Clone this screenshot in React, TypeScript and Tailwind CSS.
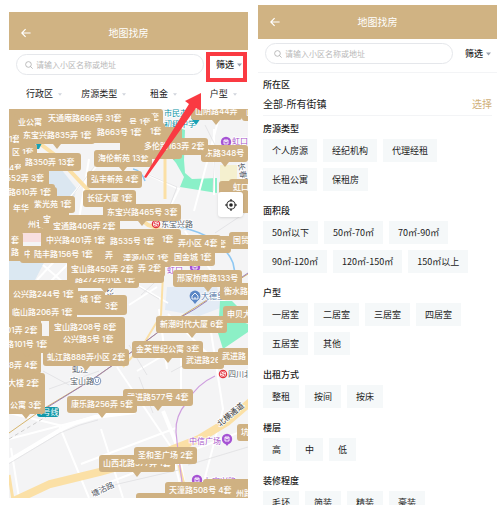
import { useState } from "react";

type Pin = { x: number; y: number; text: string; tail?: boolean };

// x, y, width, height of bubbles that are buried under the labelled ones
const BURIED = [
  [-4, -4, 156, 38],
  [111, 18, 62, 32],
  [-4, 30, 30, 16],
  [-4, 44, 76, 18],
  [-4, 60, 44, 20],
  [-4, 78, 52, 30],
  [-4, 98, 64, 20],
  [-4, 106, 114, 18],
  [-4, 122, 16, 26],
  [32, 120, 140, 28],
  [58, 148, 64, 26],
  [108, 146, 47, 28],
  [-4, 171, 70, 34],
  [66, 186, 52, 20],
  [-4, 204, 36, 58],
  [40, 208, 76, 38],
  [-4, 264, 40, 36],
  [210, 72, 40, 32],
  [190, 127, 32, 17],
  [194, 370, 60, 30],
  [127, 384, 80, 17],
];

// later pins are drawn over earlier ones, x / y is the top left of the bubble
const PINS: Pin[] = [
  { x: 138, y: 0, text: "套" },
  { x: 5, y: 5, text: "业公寓" },
  { x: 35, y: 1, text: "天通庵路666弄 31套" },
  { x: 116, y: 5, text: "号 1套" },
  { x: 137, y: 14, text: "1套" },
  { x: -4, y: 22, text: "1套" },
  { x: 84, y: 15, text: "路663号 1套" },
  { x: 10, y: 18, text: "东宝兴路835弄 1套", tail: true },
  { x: -1, y: 35, text: "区 1套" },
  { x: -4, y: 51, text: "4套" },
  { x: 12, y: 45, text: "路350弄 13套" },
  { x: -7, y: 61, text: "552弄 3套" },
  { x: -5, y: 75, text: "路610弄 1套" },
  { x: 0, y: 91, text: "年华" },
  { x: 21, y: 87, text: "紫光苑 1套" },
  { x: 85, y: 41, text: "海伦新苑 13套", tail: true },
  { x: 182, y: -6, text: "山阴路44弄", tail: true },
  { x: 233, y: -5, text: "山" },
  { x: 192, y: 36, text: "东路348号", tail: true },
  { x: 131, y: 29, text: "多伦路163弄 2套", tail: true },
  { x: 78, y: 62, text: "弘丰新苑 4套" },
  { x: 74, y: 81, text: "长征大厦 1套" },
  { x: 220, y: 70, text: "虹口" },
  { x: 15, y: 107, text: "州君" },
  { x: 30, y: 102, text: "宝" },
  { x: 94, y: 95, text: "东宝兴路465号 3套", tail: true },
  { x: 40, y: 109, text: "宝通路406弄 2套" },
  { x: -2, y: 123, text: "套" },
  { x: -2, y: 135, text: "路" },
  { x: 149, y: 122, text: "1套" },
  { x: 205, y: 127, text: "套" },
  { x: 165, y: 126, text: "弄小区 4套" },
  { x: 220, y: 123, text: "国贸" },
  { x: 97, y: 124, text: "路535号 1套" },
  { x: 33, y: 123, text: "中兴路401弄 1套" },
  { x: 92, y: 138, text: "弄" },
  { x: 110, y: 141, text: "溧源小区 1套" },
  { x: 161, y: 140, text: "国金城 1套" },
  { x: 11, y: 137, text: "中" },
  { x: 21, y: 137, text: "陆丰路156号 1套" },
  { x: 62, y: 162, text: "路272弄小区 1套", tail: true },
  { x: 58, y: 152, text: "宝山路450弄 2套" },
  { x: 125, y: 151, text: "弄 2套", tail: true },
  { x: 164, y: 161, text: "邢家桥南路133号", tail: true },
  { x: 211, y: 174, text: "衡水路" },
  { x: 214, y: 197, text: "申贝大" },
  { x: 92, y: 189, text: "3套" },
  { x: 67, y: 182, text: "城 1套" },
  { x: 0, y: 177, text: "公兴路244号 1套" },
  { x: -1, y: 195, text: "临山路206弄 1套" },
  { x: -7, y: 213, text: "01弄 2套" },
  { x: 41, y: 210, text: "宝山路208号 8套" },
  { x: 50, y: 222, text: "公兴路5号 1套" },
  { x: -7, y: 227, text: "路101号 1套", tail: true },
  { x: -4, y: 248, text: "8弄 4套" },
  { x: 34, y: 240, text: "虬江路888弄小区 2套", tail: true },
  { x: -5, y: 266, text: "大楼 2套" },
  { x: -3, y: 288, text: "公寓 3套", tail: true },
  { x: 114, y: 280, text: "武进路577号 4套", tail: true },
  { x: 58, y: 287, text: "康乐路256弄 5套", tail: true },
  { x: 147, y: 207, text: "新潮时代大厦 6套", tail: true },
  { x: 123, y: 232, text: "金芙世纪公寓 3套", tail: true },
  { x: 173, y: 243, text: "武进路26" },
  { x: 209, y: 239, text: "武进路" },
  { x: 90, y: 346, text: "山西北路577弄 1套", tail: true },
  { x: 125, y: 338, text: "圣和圣广场 2套" },
  { x: 228, y: 315, text: "坑" },
  { x: 223, y: 376, text: "州路" },
  { x: 156, y: 373, text: "天潼路508号 4套" },
];

const DISTRICTS = ["行政区", "房源类型", "租金", "户型"];

const SECTIONS = [
  {
    title: "房源类型",
    options: ["个人房源", "经纪机构", "代理经租", "长租公寓", "保租房"],
  },
  {
    title: "面积段",
    options: [
      "50㎡以下",
      "50㎡-70㎡",
      "70㎡-90㎡",
      "90㎡-120㎡",
      "120㎡-150㎡",
      "150㎡以上",
    ],
  },
  {
    title: "户型",
    options: ["一居室", "二居室", "三居室", "四居室", "五居室", "其他"],
  },
  { title: "出租方式", options: ["整租", "按间", "按床"] },
  { title: "楼层", options: ["高", "中", "低"] },
  { title: "装修程度", options: ["毛坯", "简装", "精装", "豪装"] },
];

function Caret({ small = false }: { small?: boolean }) {
  return (
    <svg
      viewBox="0 0 6 4"
      className={small ? "w-1 h-[3px] text-gray-300" : "w-[5px] h-1 text-gray-400"}
      aria-hidden="true"
    >
      <path d="M0 0.3h6L3 3.8z" fill="currentColor" />
    </svg>
  );
}

function Header({ className }: { className: string }) {
  return (
    <header
      className={`relative flex shrink-0 items-center justify-center bg-[#d0b383] text-white ${className}`}
    >
      <button type="button" aria-label="返回" className="absolute left-3">
        <svg viewBox="0 0 10 10" className="size-[10px]" fill="none">
          <path
            d="M9.6 5H1M4.6 1.2L0.8 5l3.8 3.8"
            stroke="currentColor"
            strokeWidth="1.2"
          />
        </svg>
      </button>
      <h1 className="text-[10px] leading-4">地图找房</h1>
    </header>
  );
}

function SearchRow({ marked = false }: { marked?: boolean }) {
  return (
    <div className="relative flex shrink-0 items-center gap-3 pt-1 pr-[6px] pl-[7px]">
      <label className="flex h-[21px] min-w-0 flex-1 items-center gap-[3px] rounded-full border border-gray-200 pl-2">
        <svg viewBox="0 0 9 9" className="size-[8px] shrink-0" fill="none">
          <circle cx="3.9" cy="3.9" r="3.2" stroke="#a3a3a3" strokeWidth="0.8" />
          <path d="M6.2 6.2L8.6 8.6" stroke="#a3a3a3" strokeWidth="0.8" />
        </svg>
        <input
          type="text"
          aria-label="搜索"
          placeholder="请输入小区名称或地址"
          className="w-full min-w-0 text-[8px] leading-3 outline-none placeholder:text-[#b9b9b9]"
        />
      </label>
      <button
        type="button"
        className="flex items-center gap-[3px] text-[9px] leading-3 font-medium text-[#222]"
      >
        筛选
        <Caret />
      </button>
      {marked && (
        <span className="absolute top-[2px] right-px h-[30px] w-[41px] border-4 border-[#fa3a42]" />
      )}
    </div>
  );
}

function MapBase() {
  return (
    <svg
      viewBox="0 0 239 389"
      preserveAspectRatio="xMinYMin slice"
      className="absolute inset-0 h-full w-full"
      aria-hidden="true"
    >
      <rect width="239" height="389" fill="#f4f4f5" />
      {/* blocks */}
      <path d="M38 60h14l16 20-6 16-24 4z" fill="#dbe7f1" />
      <path d="M0 148h38l-12 23H0z" fill="#dbe8f2" />
      <path d="M12 124h20v9H12z" fill="#f8dfe0" />
      <path d="M158 178h50l6 20-24 9-34-6z" fill="#e3ebf5" />
      <path d="M211 56h17v25h-17z" fill="#f5f0cf" />
      <path
        d="M171 19l5 2-1 30 1 13 7 6 25-1v15l-37-6 4-10-8-14-5-6z"
        fill="#8af0c8"
      />
      <path d="M211 192h12l8 8v12l8 3v8l-25 17-5-16z" fill="#8cf0c6" />
      {/* minor streets */}
      <g stroke="#ffffff" strokeWidth="2" fill="none">
        <path d="M28 171l26-28M40 174l30-30M34 156l28 24" />
        <path d="M60 90l38-46M70 110l10-60M140 66l30 14-12 24" />
        <path d="M111 166l48 28M120 196l28-18M128 262l44-26M172 236v50" />
        <path d="M108 258l54 80 12 50M159 205l60 60M200 210l14 90-20 76" />
        <path d="M72 355l95-36M50 316l30 73M92 320l22 69M96 375l143-55" />
        <path d="M150 200l8 60M0 330l100-26M185 102l24-90M205 20v66" />
        <path d="M0 304l58 14M10 389l-8-50M176 122l30 46" />
      </g>
      <g stroke="#dcdce0" strokeWidth="0.7" fill="none">
        <path d="M58 94l36-48M140 66l28 12-10 26M196 16l10 20-2 46" />
        <path d="M34 262l26 14 28-8 30-22M162 263l26-14M40 280l50-18" />
        <path d="M130 268l14 36M120 236l18 30M179 356l60-18M96 378l78-18" />
        <path d="M120 172l30 18M132 186l24-22M206 124l33-22" />
      </g>
      <path d="M-4 354l55-33 15-7 20-6 40-5" stroke="#fff" strokeWidth="4" fill="none" />
      <path d="M-4 357l55-33 20-8 18-5" stroke="#dadade" strokeWidth="0.6" fill="none" />
      <path d="M154 302l14 34 6 36" stroke="#fff" strokeWidth="4" fill="none" />
      {/* main roads */}
      <g stroke="#fbe0a6" fill="none">
        <path d="M-4 396l45-21 50-12 50-14 49-19 28-17 28-24" strokeWidth="8" />
        <path d="M30 34l16 12 34 36" strokeWidth="4" />
        <path d="M117 98l22 18 40 14" strokeWidth="4" />
        <path d="M154 166l-2 40-18 30-20 22" strokeWidth="2" />
        <path d="M156 40v50M170 356l5 20M0 366l4 25" strokeWidth="3" />
      </g>
      {/* metro lines and river */}
      <path d="M0 324l34-24 50-30 40-28 36-27 79-50" stroke="#d6b56c" strokeWidth="1" fill="none" />
      <path d="M34 301l50-31 40-28 36-27 26-15 53-36" stroke="#9a7fb4" strokeWidth="1" fill="none" />
      <path d="M0 330l50-30" stroke="#bbb" strokeWidth="0.7" strokeDasharray="4 3" fill="none" />
      <path
        d="M206 267q-18 8-28 26-12 14-11 30 2 20 6 50"
        stroke="#cf9fdf"
        strokeWidth="1.2"
        fill="none"
      />
      <path d="M124 60q8 1 12 12M160 116q52 8 64 38l2 10" stroke="#8fc8f3" strokeWidth="1.6" fill="none" />
      {/* place names */}
      <g
        fontFamily='"Noto Sans CJK SC", sans-serif'
        fontSize="8"
        stroke="#fff"
        strokeWidth="1.5"
        paintOrder="stroke"
      >
        <g fill="#555b68">
          <text x="152" y="118">东宝兴路</text>
          <text x="192" y="190" fill="#5779a8">大德里</text>
          <text x="61" y="275">宝山路</text>
          <text x="63" y="263">虬江</text>
          <text x="219" y="268">四川北</text>
          <text x="84" y="388" transform="rotate(-25 84 388)">塘沽路</text>
          <text x="211" y="318" transform="rotate(-40 211 318)" fill="#333">北横通道</text>
          <text x="229" y="54" transform="rotate(80 229 54)">长春路</text>
          <text x="97" y="176" transform="rotate(80 97 176)">公兴</text>
        </g>
        <g fill="#0c93a6">
          <text x="155" y="7">市民办</text>
          <text x="155" y="18">初级中学</text>
        </g>
        <g fill="#a653c9">
          <text x="223" y="35">虹口</text>
          <text x="158" y="164">虹口</text>
          <text x="180" y="335">中信广场</text>
          <text x="195" y="375">七宝兴路</text>
        </g>
      </g>
      {/* poi icons */}
      <path d="M182 9h10l-5 7z" fill="#16a0b4" />
      <path d="M27 34h6l-3 6h-2z" fill="#16a0b4" />
      <rect x="28" y="298" width="22" height="10" rx="3" fill="#1097a8" />
      <text x="29" y="306" fontSize="8" fill="#fff" fontFamily='"Noto Sans CJK SC", sans-serif'>
        4号线
      </text>
      {[
        [217, 33],
        [186, 158],
        [218, 330],
        [188, 371],
      ].map(([x, y]) => (
        <g key={`${x}-${y}`} fill="#a653d4">
          <path d={`M${x - 3} ${y + 3}h6l-3 4z`} />
          <circle cx={x} cy={y} r="5.2" />
          <path
            d={`M${x - 2} ${y - 2}h4v4h-4zM${x - 1} ${y - 2}v1.4q1 1 2 0v-1.4`}
            fill="none"
            stroke="#fff"
            strokeWidth="0.9"
          />
        </g>
      ))}
      <path d="M182 190h8l-4 5z" fill="#5b87c5" />
      <circle cx="186" cy="187" r="5.4" fill="#5b87c5" />
      <path d="M183 190v-3l3-3 3 3v3zM186 190v-2" fill="none" stroke="#fff" strokeWidth="0.9" />
      {[
        [147, 115],
        [214, 265],
      ].map(([x, y]) => (
        <g key={`${x}-${y}`}>
          <circle cx={x} cy={y} r="3.6" fill="#fff" stroke="#e2323c" strokeWidth="1.3" />
          <path
            d={`M${x + 2} ${y - 1.6}q-3-1.6-4 0t2 1.6 2 1.6-4 0`}
            fill="none"
            stroke="#e2323c"
            strokeWidth="0.9"
          />
        </g>
      ))}
      <circle cx="88" cy="272" r="3.8" fill="#fff" stroke="#7d95bb" strokeWidth="1" />
      <path d="M86.6 270v3q1.4 1.6 2.8 0v-3" fill="none" stroke="#7d95bb" strokeWidth="0.9" />
    </svg>
  );
}

function MapPanel() {
  return (
    <section className="relative flex min-w-0 flex-col bg-white">
      <Header className="h-[38px] pt-1" />
      <SearchRow marked />
      <div className="mt-1 grid h-[30px] shrink-0 grid-cols-4">
        {DISTRICTS.map((name) => (
          <label
            key={name}
            className="flex items-center justify-center gap-1 pl-[10px]"
          >
            <select
              aria-label={name}
              className="appearance-none text-[9px] leading-3 text-[#222]"
            >
              <option>{name}</option>
            </select>
            <Caret small />
          </label>
        ))}
      </div>
      <div className="relative min-h-0 flex-1 overflow-hidden">
        <MapBase />
        {BURIED.map(([x, y, w, h]) => (
          <div
            key={`${x}-${y}`}
            className="absolute rounded-[3px] bg-[#cfb182]"
            style={{ left: x, top: y, width: w, height: h }}
          />
        ))}
        {PINS.map((pin) => (
          <div
            key={pin.text + pin.x}
            className='absolute rounded-[3px] bg-[#cfb182] px-1 font-["Inter","Noto_Sans_CJK_SC",sans-serif] text-[8px] leading-[17px] font-medium whitespace-nowrap text-white'
            style={{ left: pin.x, top: pin.y }}
          >
            {pin.text}
            {pin.tail && (
              <svg
                viewBox="0 0 8 5"
                className="absolute top-full left-1/2 h-[5px] w-2 -translate-x-1/2"
                aria-hidden="true"
              >
                <path d="M0 0h8L4 5z" fill="#cfb182" />
              </svg>
            )}
          </div>
        ))}
        <button
          type="button"
          aria-label="定位"
          className="absolute top-[83px] right-[5px] flex size-[25px] items-center justify-center rounded-[3px] bg-white shadow-sm"
        >
          <svg viewBox="0 0 12 12" className="size-3" fill="none" stroke="#222">
            <circle cx="6" cy="6" r="4.2" strokeWidth="1.1" />
            <circle cx="6" cy="6" r="1.8" fill="#222" stroke="none" />
            <path d="M6 0v2.6M6 9.4V12M0 6h2.6M9.4 6H12" strokeWidth="1.1" />
          </svg>
        </button>
      </div>
      <svg
        viewBox="0 0 60 88"
        className="pointer-events-none absolute top-20 right-[45px] h-[88px] w-[60px]"
        aria-hidden="true"
      >
        <path d="M58 1L42 9l4 3L1 85l2 1L53 16l5 3z" fill="#fa3a42" />
      </svg>
    </section>
  );
}

function FilterPanel() {
  const [picked, setPicked] = useState<string[]>([]);

  const toggle = (key: string) => {
    setPicked((prev) =>
      prev.includes(key) ? prev.filter((k) => k !== key) : [...prev, key]
    );
  };

  return (
    <section className="flex min-w-0 flex-col overflow-hidden bg-white">
      <Header className="h-[34px]" />
      <SearchRow />
      <div className="mt-2 border-t border-gray-100 px-[5px] pt-[5px]">
        <h2 className="text-[9px] leading-[14px] font-medium text-[#222]">
          所在区
        </h2>
        <div className="mb-[6px] flex h-6 items-center justify-between border-b border-gray-100 text-[10px] leading-4 text-[#222]">
          <span>全部-所有街镇</span>
          <button type="button" className="text-[#d0b07a]">
            选择
          </button>
        </div>
        {SECTIONS.map((section) => (
          <div key={section.title} className="mb-[13px]">
            <h2 className="mb-[3px] text-[9px] leading-[14px] font-medium text-[#222]">
              {section.title}
            </h2>
            <div className="flex flex-wrap gap-[6px]">
              {section.options.map((option) => {
                const key = section.title + option;
                return (
                  <button
                    key={option}
                    type="button"
                    aria-pressed={picked.includes(key)}
                    onClick={() => toggle(key)}
                    className="h-[23px] bg-[#f5f8f9] px-[9px] text-[9px] leading-3 text-[#222] aria-pressed:bg-[#d0b383] aria-pressed:text-white"
                  >
                    {option}
                  </button>
                );
              })}
            </div>
          </div>
        ))}
      </div>
    </section>
  );
}

function App() {
  return (
    <main className='grid h-screen grid-cols-2 gap-[10px] overflow-hidden bg-white pr-[5px] pl-[9px] font-["Noto_Sans_CJK_SC",sans-serif]'>
      <div className="grid min-h-0 pt-3 pb-[14px]">
        <MapPanel />
      </div>
      <div className="grid min-h-0 pt-[5px] pb-[7px]">
        <FilterPanel />
      </div>
    </main>
  );
}

export default App;
